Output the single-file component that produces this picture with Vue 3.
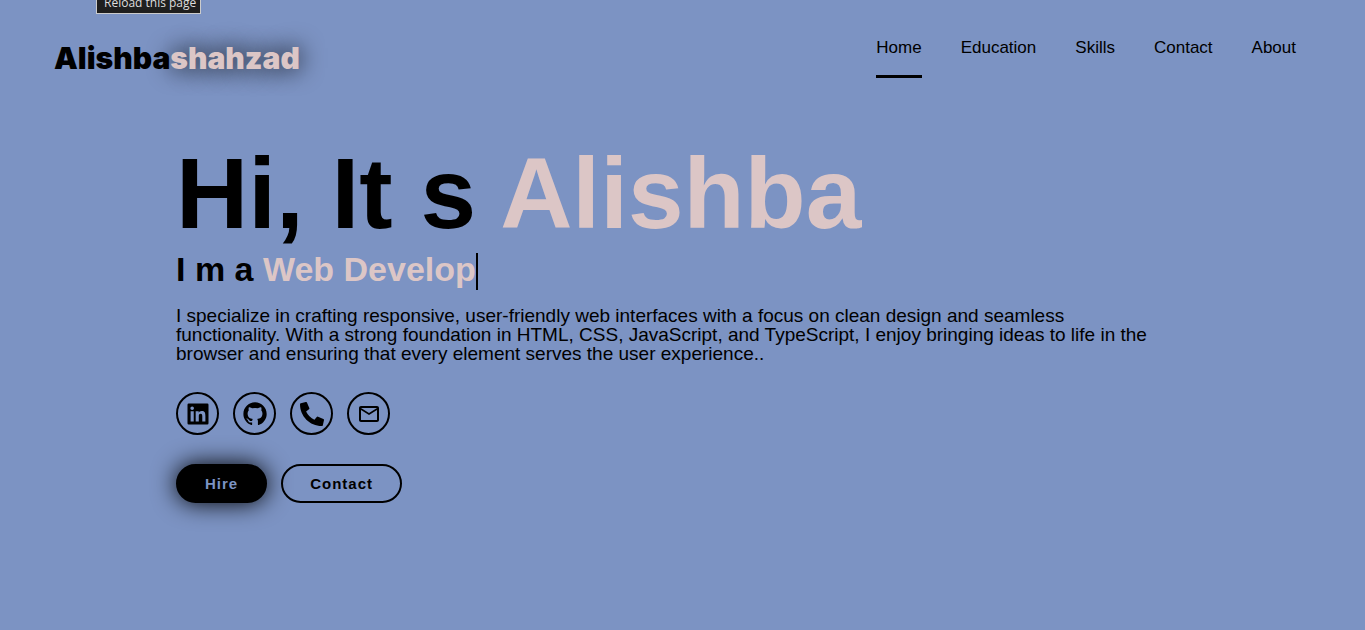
<script setup>
import { ref } from 'vue'

const links = ['Home', 'Education', 'Skills', 'Contact', 'About']
const active = ref('Home')
</script>

<template>
  <div class="page">
    <div class="tooltip" role="tooltip">Reload this page</div>

    <header class="header">
      <a href="#home" class="logo">Alishba<span>shahzad</span></a>
      <nav class="nav" aria-label="Main">
        <a
          v-for="link in links"
          :key="link"
          :href="'#' + link.toLowerCase()"
          :class="{ active: active === link }"
          @click="active = link"
        >{{ link }}</a>
      </nav>
    </header>

    <main class="hero">
      <h1>Hi, It s <span>Alishba</span></h1>
      <h2>I m a <span class="typed">Web Develop</span></h2>
      <p>
        I specialize in crafting responsive, user-friendly web interfaces with a focus on clean design and
        seamless functionality. With a strong foundation in HTML, CSS, JavaScript, and TypeScript, I enjoy
        bringing ideas to life in the browser and ensuring that every element serves the user experience..
      </p>

      <div class="social">
        <a href="#linkedin" aria-label="LinkedIn">
          <svg class="icon" viewBox="0 0 24 24"><path d="M20 3H4a1 1 0 0 0-1 1v16a1 1 0 0 0 1 1h16a1 1 0 0 0 1-1V4a1 1 0 0 0-1-1zM8.339 18.337H5.667v-8.59h2.672v8.59zM7.003 8.574a1.548 1.548 0 1 1 0-3.096 1.548 1.548 0 0 1 0 3.096zm11.335 9.763h-2.669V14.16c0-.996-.018-2.277-1.388-2.277-1.39 0-1.601 1.086-1.601 2.207v4.248h-2.667v-8.59h2.56v1.174h.037c.355-.675 1.227-1.387 2.524-1.387 2.704 0 3.203 1.778 3.203 4.092v4.71z" /></svg>
        </a>
        <a href="#github" aria-label="GitHub">
          <svg class="icon" viewBox="0 0 24 24"><path d="M12.026 2c-5.509 0-9.974 4.465-9.974 9.974 0 4.406 2.857 8.145 6.821 9.465.499.09.679-.217.679-.481 0-.237-.008-.865-.011-1.696-2.775.602-3.361-1.338-3.361-1.338-.452-1.152-1.107-1.459-1.107-1.459-.905-.619.069-.605.069-.605 1.002.07 1.527 1.028 1.527 1.028.89 1.524 2.336 1.084 2.902.829.091-.645.351-1.085.635-1.334-2.214-.251-4.542-1.107-4.542-4.93 0-1.087.389-1.979 1.024-2.675-.101-.253-.446-1.268.099-2.64 0 0 .837-.269 2.742 1.021a9.582 9.582 0 0 1 2.496-.336 9.554 9.554 0 0 1 2.496.336c1.906-1.291 2.742-1.021 2.742-1.021.545 1.372.203 2.387.099 2.64.64.696 1.024 1.587 1.024 2.675 0 3.833-2.33 4.675-4.552 4.922.355.308.675.916.675 1.846 0 1.334-.012 2.41-.012 2.737 0 .267.178.577.687.479C19.146 20.115 22 16.379 22 11.974 22 6.465 17.535 2 12.026 2z" /></svg>
        </a>
        <a href="#phone" aria-label="Phone">
          <svg class="icon small" viewBox="0 0 512 512"><path d="M497.39 361.8l-112-48a24 24 0 0 0-28 6.9l-49.6 60.6A370.66 370.66 0 0 1 130.6 204.11l60.6-49.6a23.94 23.94 0 0 0 6.9-28l-48-112A24.16 24.16 0 0 0 122.6.61l-104 24A24 24 0 0 0 0 48c0 256.5 207.9 464 464 464a24 24 0 0 0 23.4-18.6l24-104a24.29 24.29 0 0 0-14.01-27.6z" /></svg>
        </a>
        <a href="#mail" aria-label="Email">
          <svg class="icon small" viewBox="0 0 24 24"><path d="M20 4H4c-1.103 0-2 .897-2 2v12c0 1.103.897 2 2 2h16c1.103 0 2-.897 2-2V6c0-1.103-.897-2-2-2zm0 2l-8 5-8-5h16zM4 18V8l8 5 8-5v10H4z" /></svg>
        </a>
      </div>

      <div class="actions">
        <button type="button" class="btn solid">Hire</button>
        <button type="button" class="btn">Contact</button>
      </div>
    </main>
  </div>
</template>

<style>
body {
  background: #7c93c3;
}
</style>

<style scoped>
.page {
  position: relative;
  min-height: 100vh;
  box-sizing: border-box;
  overflow: hidden;
  background: #7c93c3;
  color: #000;
  font-family: "Liberation Sans", Arial, sans-serif;
}

.tooltip {
  position: absolute;
  top: -9px;
  left: 96px;
  padding: 2px 4px 2px 7px;
  border: 1px solid #ccc;
  background: #1f1f1f;
  color: #ddd;
  font: 12px/17px "Open Sans", sans-serif;
}

.header {
  display: flex;
  justify-content: space-between;
  align-items: flex-start;
  padding: 38px 69px 0 54px;
}

a {
  color: inherit;
  text-decoration: none;
}

.logo {
  margin-top: 3px;
  font: 900 30px/34px Inter, sans-serif;
}

.logo span {
  color: #dcc6c6;
  text-shadow: 0 0 25px #000;
}

.nav {
  display: flex;
  gap: 39px;
  font-size: 17px;
  line-height: 19px;
}

.nav a {
  padding-bottom: 18px;
  border-bottom: 3px solid transparent;
}

.nav a.active {
  border-color: #000;
}

.hero {
  padding: 64px 176px 0;
}

h1,
h2,
p {
  margin: 0;
}

h1 {
  font-size: 100px;
  line-height: 102px;
}

h1 span,
h2 span {
  color: #dcc6c6;
}

h2 {
  margin-top: 9px;
  font-size: 34px;
  line-height: 33px;
}

.typed {
  display: inline-block;
  padding-bottom: 4px;
  border-right: 2px solid #000;
}

p {
  max-width: 990px;
  margin-top: 16px;
  font-size: 19px;
  line-height: 19px;
}

.social {
  display: flex;
  gap: 14px;
  margin-top: 29px;
}

.social a {
  display: grid;
  place-items: center;
  width: 39px;
  height: 39px;
  border: 2px solid #000;
  border-radius: 50%;
}

.icon {
  width: 28px;
  height: 28px;
  fill: currentColor;
}

.icon.small {
  width: 24px;
  height: 24px;
}

.actions {
  display: flex;
  gap: 14px;
  margin-top: 29px;
}

.btn {
  padding: 9px 27px;
  border: 2px solid #000;
  border-radius: 20px;
  background: transparent;
  color: #000;
  font: bold 15px/17px "Liberation Sans", Arial, sans-serif;
  letter-spacing: 1px;
}

.btn.solid {
  background: #000;
  color: #7c93c3;
  box-shadow: 0 0 25px #000;
}
</style>
